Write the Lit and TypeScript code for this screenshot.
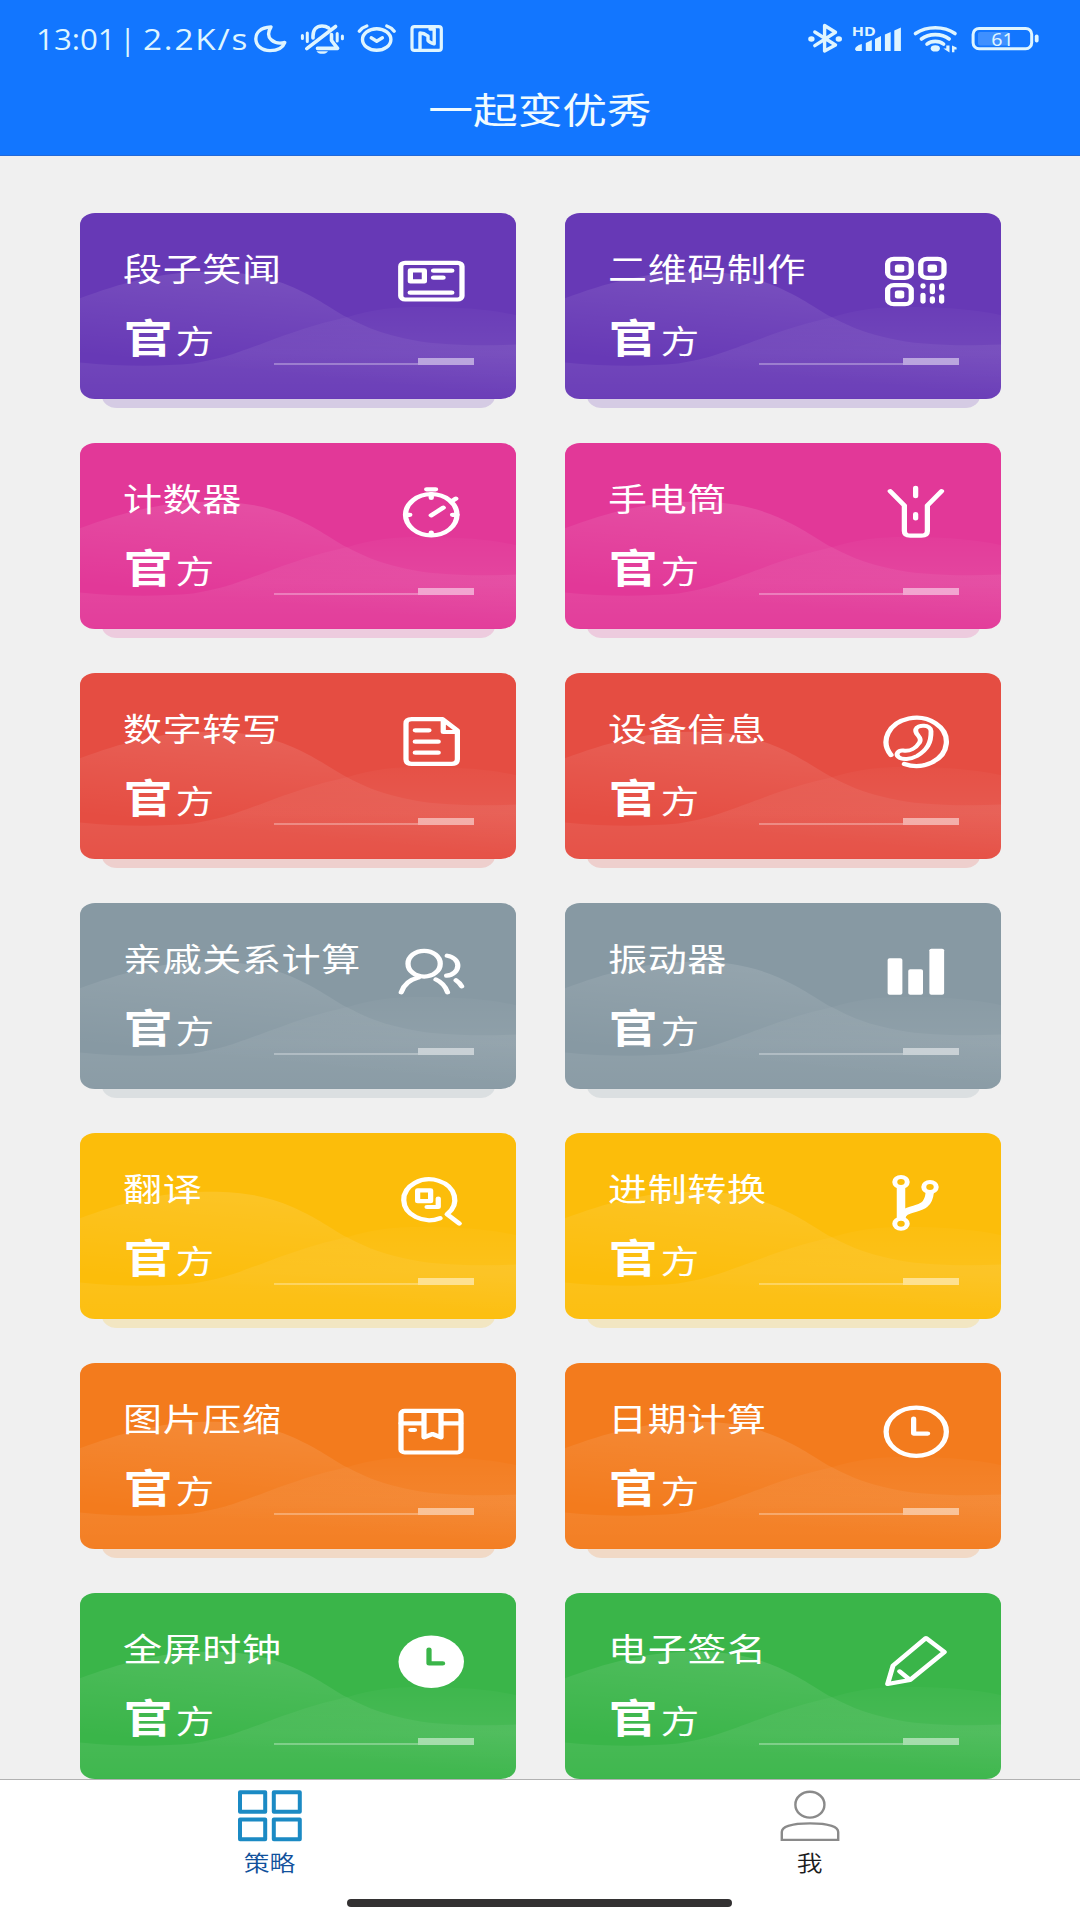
import { LitElement, html, svg, css } from "lit";
import type { SVGTemplateResult } from "lit";
import { customElement, property } from "lit/decorators.js";
import { styleMap } from "lit/directives/style-map.js";

interface Tool {
  name: string;
  icon: string;
  color: string;
}

const TOOLS: Tool[] = [
  { name: "段子笑闻", icon: "news", color: "#6739b6" },
  { name: "二维码制作", icon: "qr", color: "#6739b6" },
  { name: "计数器", icon: "timer", color: "#e23898" },
  { name: "手电筒", icon: "torch", color: "#e23898" },
  { name: "数字转写", icon: "doc", color: "#e54d42" },
  { name: "设备信息", icon: "phone", color: "#e54d42" },
  { name: "亲戚关系计算", icon: "people", color: "#8799a3" },
  { name: "振动器", icon: "bars", color: "#8799a3" },
  { name: "翻译", icon: "translate", color: "#fcbd0a" },
  { name: "进制转换", icon: "branch", color: "#fcbd0a" },
  { name: "图片压缩", icon: "box", color: "#f37b1d" },
  { name: "日期计算", icon: "clock", color: "#f37b1d" },
  { name: "全屏时钟", icon: "clockFill", color: "#3ab549" },
  { name: "电子签名", icon: "pencil", color: "#3ab549" },
];

/* Tool icons on a 64 x 64 grid, drawn with a white stroke. */
const ICONS: Record<string, SVGTemplateResult> = {
  news: svg`<rect x="7" y="12.8" width="49" height="36.7" rx="3.5"/>
    <rect x="14.7" y="20.4" width="11.2" height="11" stroke-linejoin="round"/>
    <path d="M33.2 20.7H47.9M33.2 27.7H40.9M14.5 42.7H47.9"/>`,
  qr: svg`<rect x="8.5" y="8.8" width="18.9" height="19" rx="5"/>
    <rect x="35" y="8.8" width="18.6" height="19" rx="5"/>
    <rect x="8.5" y="35.2" width="18.9" height="19" rx="5"/>
    <g fill="#fff" stroke="none">
      <rect x="14.3" y="14.4" width="7.5" height="8" rx="2"/>
      <rect x="40.5" y="14.4" width="7.5" height="8" rx="2"/>
      <rect x="14.3" y="40.6" width="7.5" height="8" rx="2"/>
    </g>
    <path d="M36.8 35.4V36.6M36.8 44.8V51.6M44.3 35.4V42.2M44.3 48.4V51.6M51.7 35.4V38.6M51.7 46.4V51.6"/>`,
  timer: svg`<circle cx="31.4" cy="34.8" r="20.6"/>
    <path d="M27.7 9.3H34.9M31.4 14V18M11 34.8H14.3M48.4 34.8H52M31.4 52.5V55M31.4 35.3L41 27.7M47.5 21.5L51 18.6"/>`,
  torch: svg`<path d="M10.6 11.2L21.9 25.5V51Q21.9 55.7 26.6 55.7H35.6Q40.3 55.7 40.3 51V25.5L51.6 11.2M30.9 7.8V16.2M30.9 34V38.5"/>`,
  doc: svg`<path d="M15.7 9.2H40.5L52.3 20.5V49.3Q52.3 53.8 47.8 53.8H15.7Q11.2 53.8 11.2 49.3V13.7Q11.2 9.2 15.7 9.2ZM41 10V22H52M18.6 20.3H29.6M18.6 31.7H37M18.6 42.7H37"/>`,
  phone: svg`<path d="M21.9 54A24.1 24.1 0 1 0 11.2 45"/>
    <path stroke-width="3.9" d="M31 19.5C32.5 14 43 14.5 43.2 21C43.5 33 40 40 32 46C27 49.5 20 50 17.2 47C14.5 44 17 40 21 40.5C26 41.5 31 38.5 34 32.5C37 27 30 25 31 19.5Z"/>`,
  people: svg`<circle cx="25.7" cy="23.7" r="12.9"/>
    <path d="M7.4 52.3Q10.6 40.8 21 37.6M35.2 39.5Q42.1 43.5 44.4 52.3M44.2 15.7A10.1 10.1 0 0 1 43.7 35.7M51.3 40.3Q54.1 42.5 55.7 46.3"/>`,
  bars: svg`<g fill="#fff" stroke="none">
    <rect x="8.5" y="18.3" width="11.8" height="36.4" rx="1.6"/>
    <rect x="25" y="29.3" width="11.8" height="25.4" rx="1.6"/>
    <rect x="41.9" y="8.7" width="11.8" height="46" rx="1.6"/></g>`,
  translate: svg`<path d="M38.4 48.25A20.4 20.4 0 1 1 44.1 44.3L53.8 53.6M37 28.5V37H28"/>
    <rect x="20.5" y="20.4" width="10.4" height="10.8"/>`,
  branch: svg`<g stroke-width="4"><circle cx="19.2" cy="12" r="5"/><circle cx="42.4" cy="17" r="5"/><circle cx="19.2" cy="53.7" r="5"/></g>
    <path stroke-width="6.8" stroke-linecap="butt" d="M19.2 18V48.5"/>
    <path stroke-width="6.6" stroke-linecap="butt" d="M42.2 22.5C41.2 35 36 36.8 30 38.8C23 41 20.4 43 19.4 48"/>`,
  box: svg`<rect x="7.2" y="10.8" width="48" height="41.7" rx="3"/>
    <path d="M7.2 23.3H25.6M39.2 23.3H55M25.6 11V37.3L32.4 34L39.2 37.3V11M15 30H18"/>`,
  clock: svg`<circle cx="31.4" cy="31.8" r="24.1"/><path d="M29.3 18.7V33.6H40.5"/>`,
  clockFill: svg`<circle cx="31.4" cy="31.7" r="26.2" fill="#fff" stroke="none"/><path stroke="#3ab549" d="M29.6 19.5V33.4H40.5"/>`,
  pencil: svg`<path stroke-width="4" d="M39.2 8L53.9 22L26.4 50L8.5 54L12.8 35.7ZM18.1 41.3L25.5 49"/>`,
};

@customElement("tool-card")
export class ToolCard extends LitElement {
  @property() name = "";
  @property() icon = "";
  @property() color = "";

  static styles = css`
    :host {
      display: block;
      position: relative;
      z-index: 0;
    }
    .shade {
      position: absolute;
      z-index: -1;
      left: 22px;
      right: 21px;
      bottom: -9.4px;
      height: 30px;
      border-radius: 0 0 15px 15px / 0 0 12px 12px;
      opacity: 0.2;
    }
    .card {
      position: relative;
      box-sizing: border-box;
      height: 100%;
      padding: 36px 42px 0 43.4px;
      border-radius: 15px / 12px;
      overflow: hidden;
      color: #fff;
    }
    .waves {
      position: absolute;
      inset: 0;
      width: 100%;
      height: 100%;
    }
    .top,
    .bottom {
      position: relative;
      display: flex;
      justify-content: space-between;
    }
    .name {
      font-size: 32px;
      line-height: 40px;
      letter-spacing: 0.5px;
      margin-top: -2px;
      white-space: nowrap;
      width: 0;
      transform: scaleX(1.22);
      transform-origin: 0 0;
    }
    .icon {
      display: block;
      width: 80px;
      height: 64px;
      margin: 0.6px 2px -0.6px 0;
    }
    .official {
      display: flex;
      align-items: baseline;
      margin-top: -2px;
      padding-left: 0.6px;
      line-height: 50px;
      font-size: 31.5px;
      transform: scaleX(1.22);
      transform-origin: 0 0;
    }
    .official b {
      font-size: 40px;
      font-weight: 700;
      margin-right: 2.6px;
    }
    .meter {
      display: flex;
      align-items: flex-end;
      width: 200px;
      height: 51.6px;
    }
    .track {
      flex: 1;
      height: 2px;
      background: rgba(255, 255, 255, 0.3);
    }
    .thumb {
      width: 56px;
      height: 7px;
      background: rgba(255, 255, 255, 0.5);
    }
  `;

  render() {
    return html`
      <div class="shade" style=${styleMap({ background: this.color })}></div>
      <div class="card" style=${styleMap({ background: this.color })}>
        <svg class="waves" viewBox="0 0 436 185" preserveAspectRatio="none">
          <defs>
            <linearGradient id="a" gradientUnits="userSpaceOnUse" x1="205" y1="58" x2="195" y2="160">
              <stop offset="0" stop-color="#fff" stop-opacity=".12" />
              <stop offset="1" stop-color="#fff" stop-opacity="0" />
            </linearGradient>
            <linearGradient id="b" gradientUnits="userSpaceOnUse" x1="0" y1="95" x2="0" y2="185">
              <stop offset="0" stop-color="#fff" stop-opacity=".025" />
              <stop offset=".5" stop-color="#fff" stop-opacity=".07" />
              <stop offset="1" stop-color="#fff" stop-opacity=".03" />
            </linearGradient>
          </defs>
          <path
            fill="url(#a)"
            d="M0 85C40 70 80 59 125 58.5C160 58 185 62 213 74C240 86 250 95 267 104C290 116 305 121 325 125C350 131 390 133 436 131V185H0Z"
          />
          <path
            fill="url(#b)"
            d="M0 149C40 153 80 153 113 150C145 145 160 138 180 131C215 118 235 111 267 104C300 93 330 93 363 94C395 95 420 98 436 102V185H0Z"
          />
        </svg>
        <div class="top">
          <div class="name">${this.name}</div>
          <svg
            class="icon"
            viewBox="0 0 64 64"
            preserveAspectRatio="none"
            fill="none"
            stroke="#fff"
            stroke-width="4.2"
            stroke-linecap="round"
            stroke-linejoin="round"
          >
            ${ICONS[this.icon]}
          </svg>
        </div>
        <div class="bottom">
          <div class="official"><b>官</b><span>方</span></div>
          <div class="meter"><span class="track"></span><span class="thumb"></span></div>
        </div>
      </div>
    `;
  }
}

@customElement("status-bar")
export class StatusBar extends LitElement {
  static styles = css`
    :host {
      display: flex;
      align-items: center;
      justify-content: space-between;
      height: 78px;
      padding: 0 41px 0 36px;
      color: #dff5ff;
    }
    .side {
      display: flex;
      align-items: center;
    }
    .clock {
      display: flex;
      width: 218px;
      font: 400 29.5px/40px "Open Sans", "Noto Sans", sans-serif;
      white-space: nowrap;
    }
    .clock span {
      transform-origin: 0 50%;
    }
    .time {
      width: 83.5px;
      transform: scaleX(1.06);
    }
    .bar {
      width: 23px;
    }
    .speed {
      letter-spacing: 1.6px;
      transform: scaleX(1.13);
    }
    svg {
      display: block;
      fill: none;
      stroke: #dff5ff;
      stroke-linecap: round;
      stroke-linejoin: round;
    }
    .solid {
      fill: #dff5ff;
      stroke: none;
    }
    text {
      fill: #dff5ff;
      stroke: none;
      font-family: "Noto Sans", sans-serif;
    }
  `;

  render() {
    return html`
      <div class="side">
        <div class="clock">
          <span class="time">13:01</span><span class="bar">|</span><span class="speed">2.2K/s</span>
        </div>
        <svg width="190" height="34" viewBox="254 22 190 34" stroke-width="3.4">
          <path d="M271 27C260 27.5 255.8 33 255.8 39C256 46 262 50.6 270 50.6C278 50.6 283 47.5 284.8 42.5C274 45 264 38 271 27Z" />
          <path stroke-width="3.6" d="M313 38V36C313 29.5 317 26 322 26C324.5 26 327 26.8 328.6 28M306.8 48.6L335.6 26.5M331.5 34.5V40.5L337.6 48.4H317.5" />
          <path stroke-width="3" d="M302.4 35.5V38.5M307.3 33V41.5M337.2 33.5V41M342.4 36V38.7" />
          <path class="solid" d="M316.5 51.2H328C326.5 54.6 318 54.6 316.5 51.2Z" />
          <ellipse cx="376.7" cy="39.5" rx="14.2" ry="10.8" />
          <path d="M359.3 31.2Q362 27.5 366.8 26M386.8 26Q391.5 27.5 394.2 31.2M371.2 37.8L376.7 41.2L382.4 37.8" />
          <rect x="412" y="26.6" width="29.3" height="23.8" rx="2.5" stroke-width="3.2" />
          <path stroke-width="3.4" d="M420 49V33Q424 33 428 36V40.5Q429.5 42.5 434.2 43.8V29H430" />
        </svg>
      </div>
      <div class="side">
        <svg width="231" height="34" viewBox="808 22 231 34">
          <path stroke-width="3.4" d="M814.8 32L835.5 45L824.6 51V25.5L835.5 32.3L814.8 45.6" />
          <ellipse class="solid" cx="811.4" cy="39" rx="3.2" ry="2.7" />
          <ellipse class="solid" cx="838.8" cy="39" rx="3.2" ry="2.7" />
          <text x="851.8" y="35.6" font-size="12" font-weight="700" textLength="24" lengthAdjust="spacingAndGlyphs">HD</text>
          <g class="solid">
            <path d="M855 49.5Q855 46 861.8 44V51H856.3Z" />
            <path d="M865.8 43L871.8 40V51H865.8Z" />
            <path d="M875 39L881 36V51H875Z" />
            <path d="M884.9 34.5L890.7 32V51H884.9Z" />
            <path d="M894.3 30.5L900.9 27.5V51H894.3Z" />
          </g>
          <path
            stroke-width="3.6"
            d="M915.5 33.6Q924 27.8 935.3 27.8Q946.6 27.8 955 33.6M921.4 39Q927 34.6 935.3 34.6Q943.6 34.6 949.2 39M927 44.2Q930.5 41.4 935.3 41.4Q940 41.4 943.6 44.2"
          />
          <ellipse class="solid" cx="935.3" cy="48.4" rx="4.6" ry="3.1" />
          <path class="solid" d="M946.3 45.6H949.5V52.4L943.4 48.4H946.3ZM952 52.2V45.4L956.6 47.4V49.4H954.4V52.2Z" />
          <rect x="973.1" y="28.4" width="58.6" height="20.4" rx="6" stroke-width="3" />
          <rect x="978" y="32" width="31" height="13.4" rx="2" fill="#3f90ff" stroke="none" />
          <text x="991.2" y="45.5" font-size="18.4" textLength="22.5" lengthAdjust="spacingAndGlyphs">61</text>
          <rect class="solid" x="1034.8" y="34.6" width="3.8" height="8" rx="1.8" />
        </svg>
      </div>
    `;
  }
}

@customElement("app-root")
export class AppRoot extends LitElement {
  static styles = css`
    :host {
      display: flex;
      flex-direction: column;
      width: 1080px;
      height: 1920px;
      overflow: hidden;
      background: #f0f0f0;
      font-family: "Noto Sans CJK SC", sans-serif;
      font-weight: 400;
    }
    header {
      box-sizing: border-box;
      height: 156px;
      background: #1276ff;
      border-bottom: 1px solid #2269d8;
    }
    h1 {
      margin: 6px 0 0;
      text-align: center;
      font-size: 36.5px;
      line-height: 50px;
      font-weight: 400;
      color: #f0fbff;
      transform: scaleX(1.225);
    }
    main {
      flex: 1;
      min-height: 0;
      overflow: hidden;
      display: grid;
      grid-template-columns: 436px 436px;
      grid-auto-rows: 185.6px;
      gap: 44.4px 49px;
      padding: 57.4px 79px 0 80px;
    }
    footer {
      box-sizing: border-box;
      height: 141px;
      background: #fff;
      border-top: 1px solid #b2b2b2;
      display: flex;
      flex-direction: column;
      align-items: center;
    }
    nav {
      display: flex;
      width: 100%;
      height: 119px;
    }
    .tab {
      flex: 1;
      display: flex;
      flex-direction: column;
      align-items: center;
      padding-top: 9px;
      color: #1c1c1c;
    }
    .tab svg {
      display: block;
      width: 66px;
      height: 54px;
      fill: none;
      stroke: #8a8a8a;
      stroke-width: 2.4;
    }
    .tab span {
      font-size: 21.5px;
      line-height: 30px;
      font-weight: 350;
      margin-top: 4px;
      transform: scaleX(1.2);
    }
    .tab.active {
      color: #11519c;
    }
    .tab.active svg {
      stroke: #1b8ac4;
      stroke-width: 4;
      stroke-linejoin: round;
    }
    .pill {
      width: 385px;
      height: 8px;
      margin-right: 2px;
      border-radius: 4px;
      background: #333132;
    }
  `;

  render() {
    return html`
      <header>
        <status-bar></status-bar>
        <h1>一起变优秀</h1>
      </header>
      <main>
        ${TOOLS.map((t) => html`<tool-card .name=${t.name} .icon=${t.icon} .color=${t.color}></tool-card>`)}
      </main>
      <footer>
        <nav>
          <div class="tab active">
            <svg viewBox="237 1789 66 54">
              <rect x="240" y="1792.2" width="25.2" height="19.6" />
              <rect x="273.8" y="1792.2" width="26" height="19.6" />
              <rect x="240" y="1819.6" width="25.2" height="19.6" />
              <rect x="273.8" y="1819.6" width="26" height="19.6" />
            </svg>
            <span>策略</span>
          </div>
          <div class="tab">
            <svg viewBox="777 1789 66 54">
              <rect x="795.4" y="1791.8" width="29" height="25.8" rx="14.5" ry="12.6" />
              <path d="M781.8 1839.9V1832C781.8 1826.5 792 1823.4 810 1823.4C828 1823.4 838.2 1826.5 838.2 1832V1839.9Z" />
            </svg>
            <span>我</span>
          </div>
        </nav>
        <div class="pill"></div>
      </footer>
    `;
  }
}
